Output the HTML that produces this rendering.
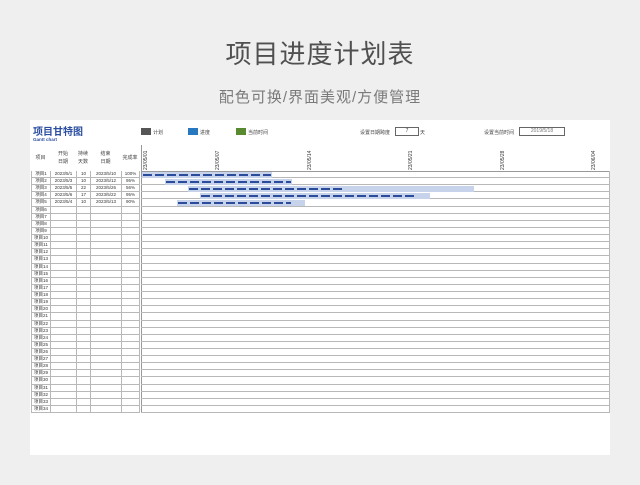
<!DOCTYPE html><html><head><meta charset="utf-8"><style>
body{margin:0;width:640px;height:485px;background:#efefef;font-family:"Liberation Sans","Noto Sans CJK SC",sans-serif;position:relative;overflow:hidden}
.a{position:absolute}
#t{left:0;width:640px;top:34px;text-align:center;font-size:26px;color:#505050;letter-spacing:1px}
#s{left:0;width:640px;top:86px;text-align:center;font-size:15px;color:#7a7a7a;letter-spacing:1px}
#card{left:30px;top:120px;width:580px;height:335px;background:#fff}
.sm{font-size:5px;color:#444;white-space:nowrap}
.r{position:absolute;height:7.12px;box-sizing:border-box;border-bottom:1px solid #b8b8b8}
.c{position:absolute;top:0;height:100%;border-right:1px solid #b8b8b8;font-size:4.5px;color:#333;text-align:center;line-height:6px;box-sizing:border-box;white-space:nowrap}
.pl{position:absolute;height:6px;background:#c7d3ea}
.pg{position:absolute;height:2px;top:2px;background:repeating-linear-gradient(90deg,#2a4c9a 0 9px,transparent 9px 12px)}
.d{position:absolute;font-size:5px;color:#333;transform:rotate(-90deg);transform-origin:left top;white-space:nowrap}
</style></head><body>
<div class="a" id="t">项目进度计划表</div>
<div class="a" id="s">配色可换/界面美观/方便管理</div>
<div class="a" id="card"></div>
<div class="a" style="left:33px;top:123px;font-size:10px;font-weight:bold;color:#2b4ea0">项目甘特图</div>
<div class="a" style="left:33px;top:137px;font-size:4.5px;color:#2b4ea0;font-weight:bold">Gantt chart</div>
<div class="a" style="left:141px;top:128px;width:10px;height:7px;background:#555"></div><div class="a sm" style="left:153px;top:129px">计划</div>
<div class="a" style="left:188px;top:128px;width:10px;height:7px;background:#2878c0"></div><div class="a sm" style="left:200px;top:129px">进度</div>
<div class="a" style="left:236px;top:128px;width:10px;height:7px;background:#5a8a30"></div><div class="a sm" style="left:248px;top:129px">当前时间</div>
<div class="a sm" style="left:360px;top:129px">设置日期跨度</div>
<div class="a sm" style="left:395px;top:127px;width:22px;height:7px;border:1px solid #666;text-align:center;line-height:7px">7</div>
<div class="a sm" style="left:420px;top:129px">天</div>
<div class="a sm" style="left:484px;top:129px">设置当前时间</div>
<div class="a sm" style="left:519px;top:127px;width:44px;height:7px;border:1px solid #666;text-align:center;line-height:7px;color:#777">2019/5/18</div>
<div class="a sm" style="left:31px;top:154px;width:19px;text-align:center">项目</div>
<div class="a sm" style="left:50px;top:150px;width:26px;text-align:center;line-height:8px">开始<br>日期</div>
<div class="a sm" style="left:76px;top:150px;width:14px;text-align:center;line-height:8px">持续<br>天数</div>
<div class="a sm" style="left:90px;top:150px;width:31px;text-align:center;line-height:8px">结束<br>日期</div>
<div class="a sm" style="left:120px;top:154px;width:20px;text-align:center">完成率</div>
<div class="a" style="left:141px;top:145px;width:468px;height:26px;border-bottom:1px solid #999"></div>
<div class="a" style="left:141px;top:145px;width:1px;height:268px;background:#999"></div>
<div id="rows"></div>
<script>
var h='',d=[["2023/5/1","10","2023/5/10","100%"],["2023/5/3","10","2023/5/12","95%"],["2023/5/5","22","2023/5/26","56%"],["2023/5/6","17","2023/5/22","95%"],["2023/5/4","10","2023/5/13","90%"]];
var L=[31,50,76,90,121],W=[19,26,14,31,18];
for(var i=0;i<34;i++){var y=171+i*7.12;var v=d[i]||["","","",""];
h+='<div class="r" style="left:31px;top:'+y+'px;width:109px;border-left:1px solid #b8b8b8">';
var vals=["项目"+(i+1)].concat(v);
for(var j=0;j<5;j++)h+='<div class="c" style="left:'+(L[j]-31)+'px;width:'+W[j]+'px">'+vals[j]+'</div>';
h+='</div><div class="r" style="left:141px;top:'+y+'px;width:469px;border-right:1px solid #b8b8b8"></div>';}
var b=[[142,272,272],[165,292,292],[188,474,343],[200,430,418],[177,305,292]];
for(var k=0;k<5;k++){var y=171.5+k*7.12;h+='<div class="pl" style="left:'+b[k][0]+'px;top:'+y+'px;width:'+(b[k][1]-b[k][0])+'px"></div><div class="pg" style="left:'+(b[k][0]+1)+'px;top:'+(y+2)+'px;width:'+(b[k][2]-b[k][0]-2)+'px"></div>';}
var ds=[["23/05/01",143],["23/05/07",215],["23/05/14",307],["23/05/21",408],["23/05/28",500],["23/06/04",591]];
for(var k=0;k<6;k++)h+='<div class="d" style="left:'+ds[k][1]+'px;top:170px">'+ds[k][0]+'</div>';
document.getElementById('rows').innerHTML=h;
</script>
</body></html>
